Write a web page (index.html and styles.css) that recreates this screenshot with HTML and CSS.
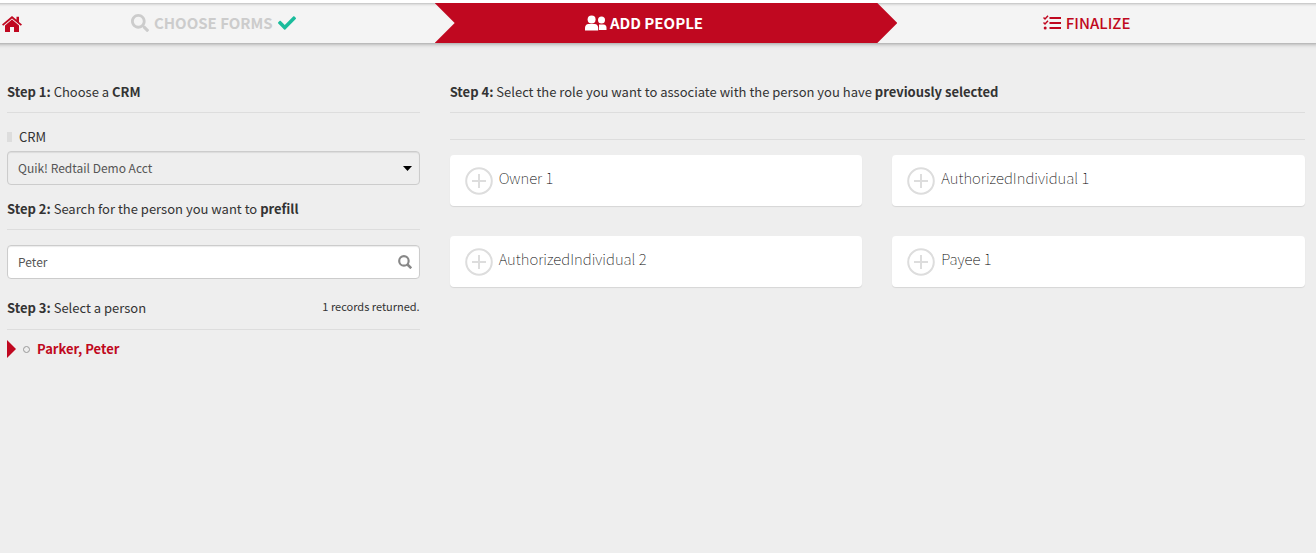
FILE: index.html
```
<!DOCTYPE html>
<html lang="en">
<head>
    <meta charset="UTF-8">
    <meta name="viewport" content="width=device-width, initial-scale=1.0">
    <title>Add People</title>
    <link rel="stylesheet" href="styles.css">
</head>
<body>
    <nav class="wizard">
        <a href="#" class="home" aria-label="Home">
            <svg width="20" height="17" viewBox="0 0 20 17" fill="currentColor">
                <path d="M10 3.600 3 9.600V16h5v-5h4v5h5V9.600z"/>
                <path d="M10 0 0 8.500l1.200 1.300L10 2.400l8.800 7.400L20 8.500l-3-2.600V.800h-2.500v3z"/>
            </svg>
        </a>
        <a href="#" class="step done">
            <svg width="18" height="18" viewBox="0 0 512 512" fill="currentColor">
                <path d="M505 442.700 405.300 343c-4.500-4.500-10.600-7-17-7H372c27.600-35.300 44-79.700 44-128C416 93.100 322.900 0 208 0S0 93.100 0 208s93.100 208 208 208c48.300 0 92.700-16.400 128-44v16.300c0 6.400 2.500 12.500 7 17l99.700 99.700c9.400 9.400 24.600 9.400 33.900 0l28.300-28.300c9.400-9.400 9.400-24.600.1-34zM208 336c-70.700 0-128-57.200-128-128 0-70.700 57.200-128 128-128 70.700 0 128 57.200 128 128 0 70.700-57.200 128-128 128z"/>
            </svg>
            <span>CHOOSE FORMS</span>
            <svg class="check" width="18" height="18" viewBox="0 0 512 512" fill="currentColor">
                <path d="M173.900 439.400l-166.400-166.400c-10-10-10-26.200 0-36.200l36.200-36.200c10-10 26.200-10 36.200 0L192 312.700 432.100 72.600c10-10 26.200-10 36.200 0l36.200 36.200c10 10 10 26.200 0 36.200l-294.400 294.400c-10 10-26.200 10-36.200 0z"/>
            </svg>
        </a>
        <a href="#" class="step active">
            <svg width="22" height="16" viewBox="0 0 22 16" fill="currentColor">
                <circle cx="16.500" cy="5" r="3.500"/>
                <path d="M14 9.500h4.500c2 0 3 1.500 3 3.200V15h-7.500z"/>
                <path class="front" d="M3.500 9h6c2.500 0 3.700 1.700 3.700 4v2.500H0V13c0-2.300 1.200-4 3.500-4z"/>
                <circle class="front" cx="6.600" cy="4.400" r="4"/>
            </svg>
            <span>ADD PEOPLE</span>
        </a>
        <a href="#" class="step next">
            <svg width="18" height="16" viewBox="0 0 18 16" fill="none" stroke="currentColor" stroke-width="2">
                <path d="M6.500 3H18M6.500 8H18M6.500 13H18"/>
                <path d="M.5 2.500 2 4 5 .8M.5 7.500 2 9l3-3.200" stroke-width="1.500"/>
                <circle cx="2.200" cy="13" r="1.500" fill="currentColor" stroke="none"/>
            </svg>
            <span>FINALIZE</span>
        </a>
    </nav>

    <main class="content">
        <section class="search-col">
            <h2 class="title"><b>Step 1:</b> Choose a <b>CRM</b></h2>
            <label class="crm-label" for="crm">CRM</label>
            <div class="field">
                <select id="crm">
                    <option>Quik! Redtail Demo Acct</option>
                </select>
                <svg class="caret" width="9" height="5" viewBox="0 0 9 5"><path d="M0 0h9L4.500 5z"/></svg>
            </div>

            <h2 class="title step-two"><label for="person"><b>Step 2:</b> Search for the person you want to <b>prefill</b></label></h2>
            <div class="field search">
                <input type="text" id="person" value="Peter">
                <button type="button" aria-label="Search">
                    <svg width="14" height="14" viewBox="0 0 13 13" fill="none" stroke="currentColor" stroke-width="2">
                        <circle cx="5.500" cy="5.500" r="4.400"/>
                        <path d="m8.800 8.800 3.500 3.500" stroke-width="2.400"/>
                    </svg>
                </button>
            </div>

            <div class="title step-three">
                <h2><b>Step 3:</b> Select a person</h2>
                <span class="records">1 records returned.</span>
            </div>
            <ul class="people">
                <li><a href="#"><i class="dot"></i>Parker, Peter</a></li>
            </ul>
        </section>

        <section class="role-col">
            <h2 class="title"><b>Step 4:</b> Select the role you want to associate with the person you have <b>previously selected</b></h2>
            <hr>
            <div class="roles">
                <button type="button" class="role">
                    <svg width="28" height="28" viewBox="0 0 28 28"><circle cx="14" cy="14" r="12.800"/><path d="M14 7v14M7 14h14"/></svg>
                    <span>Owner 1</span>
                </button>
                <button type="button" class="role">
                    <svg width="28" height="28" viewBox="0 0 28 28"><circle cx="14" cy="14" r="12.800"/><path d="M14 7v14M7 14h14"/></svg>
                    <span>AuthorizedIndividual 1</span>
                </button>
                <button type="button" class="role">
                    <svg width="28" height="28" viewBox="0 0 28 28"><circle cx="14" cy="14" r="12.800"/><path d="M14 7v14M7 14h14"/></svg>
                    <span>AuthorizedIndividual 2</span>
                </button>
                <button type="button" class="role">
                    <svg width="28" height="28" viewBox="0 0 28 28"><circle cx="14" cy="14" r="12.800"/><path d="M14 7v14M7 14h14"/></svg>
                    <span>Payee 1</span>
                </button>
            </div>
        </section>
    </main>
</body>
</html>
```
FILE: styles.css
```
* {
    box-sizing: border-box;
    margin: 0;
    padding: 0;
}

body {
    background-color: #eee;
    border-top: 3px solid #fff;
    color: #333;
    font-family: "Noto Sans CJK SC", "Noto Sans", sans-serif;
    font-size: 13px;
    line-height: 20px;
}

a {
    color: inherit;
    text-decoration: none;
}

button,
input,
select {
    font-family: inherit;
}

/* Wizard bar */
.wizard {
    position: relative;
    display: grid;
    grid-template-columns: repeat(3, 1fr);
    margin: 0 -4px 0 -8px;
    height: 40px;
    background-color: #f4f4f4;
    box-shadow: 0 0 5px rgba(0, 0, 0, 0.5), inset 0 2px 3px -1px rgba(0, 0, 0, 0.25);
    clip-path: inset(0 0 -8px 0);
}

.home {
    position: absolute;
    left: 10px;
    top: 13px;
    color: #c00820;
    line-height: 0;
}

.step {
    display: flex;
    align-items: center;
    justify-content: center;
    gap: 5px;
    font-size: 15px;
    font-weight: 500;
}

.done {
    color: #ccc;
    font-weight: 700;
}

.check {
    color: #1abc9c;
}

.active {
    margin-right: -20px;
    padding-right: 44px;
    gap: 3px;
    background-color: #c00820;
    color: #fff;
    font-weight: 700;
    clip-path: polygon(0 0, calc(100% - 20px) 0, 100% 50%, calc(100% - 20px) 100%, 0 100%, 20px 50%);
}

.front {
    stroke: #c00820;
    stroke-width: 1;
    paint-order: stroke;
}

.next {
    padding-right: 24px;
    color: #c00820;
}

/* Columns */
.content {
    display: grid;
    grid-template-columns: calc((100% + 30px) / 3 - 30px) 1fr;
    gap: 30px;
    padding: 39px 11px 30px 7px;
}

h2 {
    font-size: 13px;
    font-weight: 400;
}

.title {
    padding-bottom: 10px;
    border-bottom: 1px solid #ddd;
}

.crm-label {
    display: flex;
    align-items: center;
    gap: 7px;
    margin: 14px 0 4px;
}

.crm-label::before {
    content: "";
    width: 5px;
    height: 10px;
    background-color: #ddd;
}

.field {
    position: relative;
}

select,
input {
    display: block;
    width: 100%;
    height: 34px;
    padding: 0 30px 2px 10px;
    border: 1px solid #ccc;
    border-radius: 4px;
    box-shadow: inset 0 1px 1px rgba(0, 0, 0, 0.08);
    color: #555;
    font-size: 12px;
}

select {
    appearance: none;
    background-color: #eee;
}

input {
    background-color: #fff;
}

.caret {
    position: absolute;
    right: 8px;
    top: 15px;
    pointer-events: none;
}

.step-two {
    margin-top: 14px;
}

.search {
    margin-top: 15px;
}

.search button {
    position: absolute;
    right: 8px;
    top: 10px;
    border: none;
    background: none;
    color: #888;
    line-height: 0;
    cursor: pointer;
}

.step-three {
    display: flex;
    justify-content: space-between;
    margin-top: 19px;
    padding-bottom: 11px;
}

.records {
    font-size: 11px;
    line-height: 16px;
}

.people {
    margin-top: 9px;
    list-style: none;
}

.people a {
    display: flex;
    align-items: center;
    color: #c00820;
    font-weight: 700;
}

.people a::before {
    content: "";
    border: 9px solid transparent;
    border-left-color: #c00820;
    border-right: none;
}

.dot {
    width: 7px;
    height: 7px;
    margin: 0 7px;
    border: 1px solid #999;
    border-radius: 50%;
}

/* Roles */
hr {
    margin-top: 26px;
    border: none;
    border-top: 1px solid #ddd;
}

.roles {
    display: grid;
    grid-template-columns: 1fr 1fr;
    gap: 30px;
    margin-top: 15px;
}

.role {
    display: flex;
    align-items: center;
    gap: 6px;
    height: 51px;
    padding: 0 15px;
    border: none;
    border-radius: 4px;
    background-color: #fff;
    box-shadow: 0 1px 1px rgba(0, 0, 0, 0.1);
    color: #000;
    font-size: 15px;
    font-weight: 100;
    cursor: pointer;
}

.role span {
    padding-bottom: 6px;
}

.role svg {
    fill: none;
    stroke: #ddd;
    stroke-width: 2;
}
```
